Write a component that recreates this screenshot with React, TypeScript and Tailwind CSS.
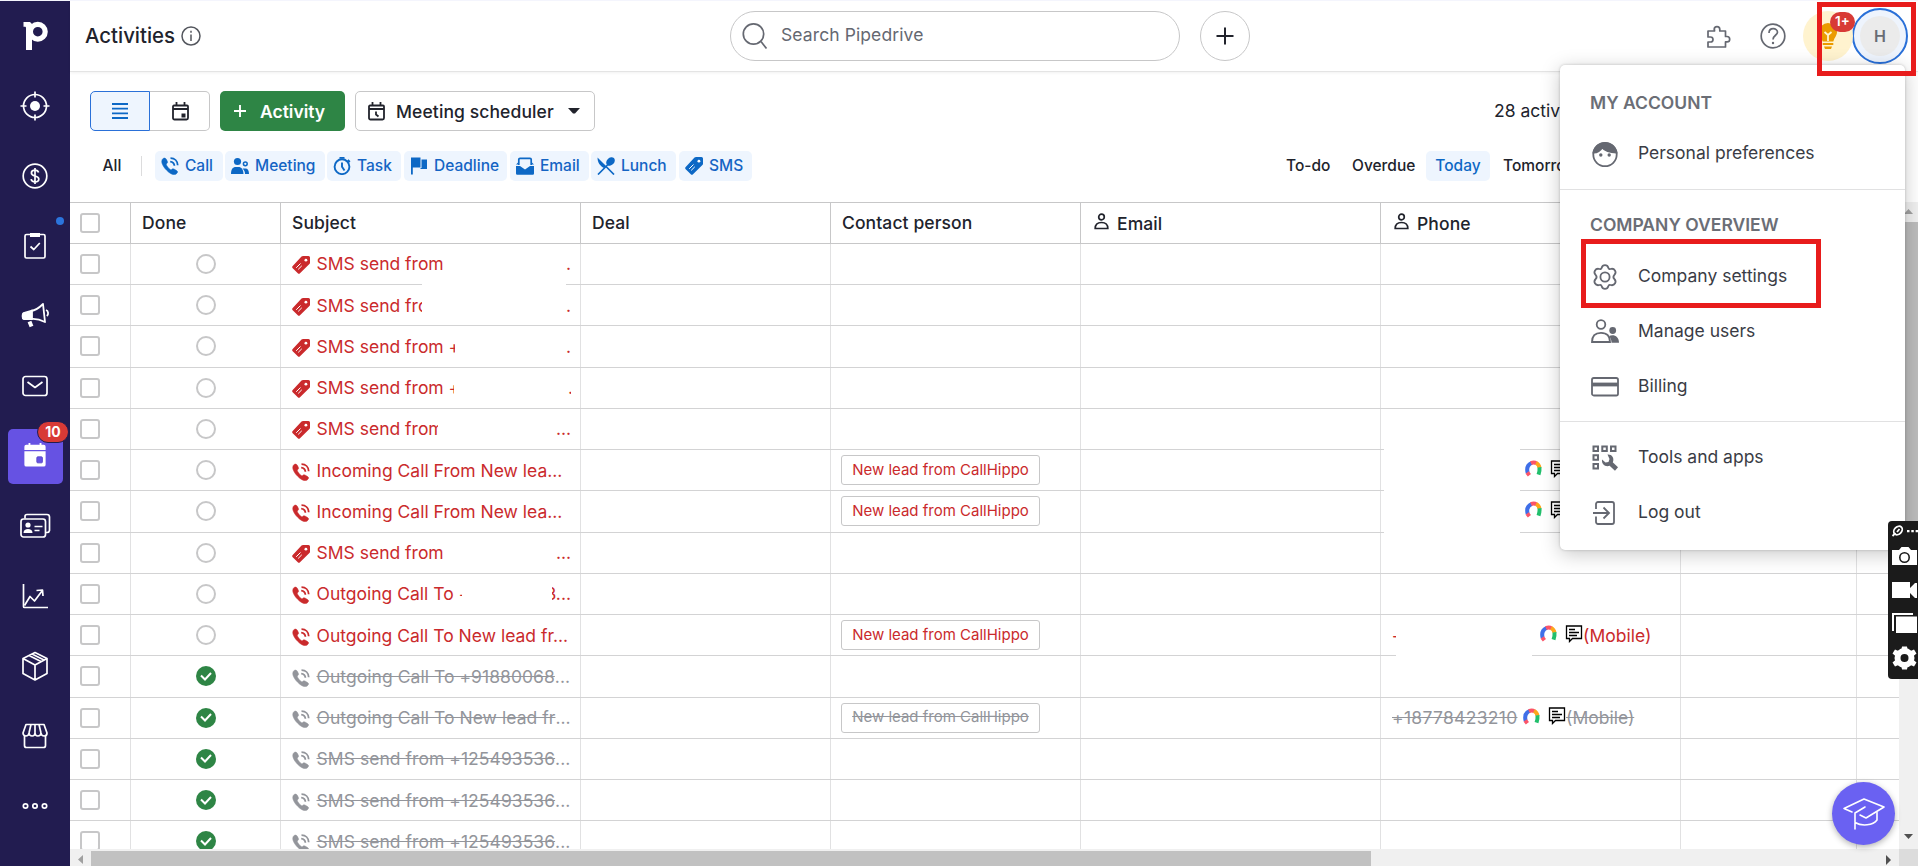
import { ReactNode } from "react";

type Kind = "sms" | "call";

type Row = {
  kind: Kind;
  text: string;
  clip?: string;
  tail?: string;
  tailClass?: string;
  done?: boolean;
  contact?: boolean;
  phone?: ReactNode;
};

const rows: Row[] = [
  { kind: "sms", text: "SMS send from", tail: "." },
  { kind: "sms", text: "SMS send fro", clip: "w-[105px]", tail: "." },
  { kind: "sms", text: "SMS send from +", clip: "w-[138px]", tail: "." },
  { kind: "sms", text: "SMS send from +", clip: "w-[137px]", tail: ".", tailClass: "w-[3px] overflow-hidden" },
  { kind: "sms", text: "SMS send from", clip: "w-[121px]", tail: "..." },
  { kind: "call", text: "Incoming Call From New lea...", contact: true, phone: <PhoneIcons className="ml-[133px]" /> },
  { kind: "call", text: "Incoming Call From New lea...", contact: true, phone: <PhoneIcons className="ml-[133px]" /> },
  { kind: "sms", text: "SMS send from", tail: "..." },
  { kind: "call", text: "Outgoing Call To +", clip: "w-[145px]", tail: "8...", tailClass: "w-[19px]" },
  {
    kind: "call",
    text: "Outgoing Call To New lead fr...",
    contact: true,
    phone: (
      <>
        <span className="w-[4px] overflow-hidden">-</span>
        <PhoneIcons className="ml-[144px]" />
        <span>(Mobile)</span>
      </>
    ),
  },
  { kind: "call", text: "Outgoing Call To +91880068", tail: "...", done: true },
  {
    kind: "call",
    text: "Outgoing Call To New lead fr",
    tail: "...",
    done: true,
    contact: true,
    phone: (
      <>
        <span className="w-[126px] tracking-[0.300px] line-through">+18778423210</span>
        <PhoneIcons className="ml-[5px]" />
        <span className="line-through">(Mobile)</span>
      </>
    ),
  },
  { kind: "call", text: "SMS send from +125493536", tail: "...", done: true },
  { kind: "call", text: "SMS send from +125493536", tail: "...", done: true },
  { kind: "call", text: "SMS send from +125493536", tail: "...", done: true },
];

export default function App() {
  return (
    <div className="relative flex h-[866px] w-[1918px] overflow-hidden border-t border-[#f4f5fd] bg-white font-[Inter,'Noto_Sans',sans-serif] text-[17.500px] text-[#21232c]">
      <Sidebar />
      <div className="flex min-w-0 flex-1 flex-col">
        <TopBar />
        <Toolbar />
        <div className="flex h-[647.5px]">
          <Table />
          <VerticalScrollbar />
        </div>
        <HorizontalScrollbar />
      </div>

      <AccountMenu />
      <div className="absolute left-[1817px] top-[1px] h-[74px] w-[99px] border-[5px] border-[#e81c1c]" />
      <div className="absolute left-[1581px] top-[238px] h-[69px] w-[240px] border-[5px] border-[#e81c1c]" />
      <RecorderWidget />
      <button className="absolute left-[1832px] top-[781px] flex size-[63px] items-center justify-center rounded-full bg-[#6a61f2] shadow-[0_2px_6px_rgba(0,0,0,0.3)]">
        <svg width="42" height="34" viewBox="0 0 42 34" fill="none" stroke="#fff" strokeWidth="1.6" strokeLinejoin="round" strokeLinecap="round">
          <path d="M9 15 1 11.5 21 2l20 8-18 11-6-3" />
          <path d="M22 10 12 16v16M34 15.500v7.500c-4 5.500-15 6.500-22 2.500" />
        </svg>
      </button>
    </div>
  );
}

/* ---------- sidebar ---------- */

function Sidebar() {
  return (
    <nav className="flex w-[70px] shrink-0 flex-col bg-[#221c50] text-white">
      <NavItem>
        <svg className="-mt-[3px]" width="30" height="32" viewBox="0 0 30 32" fill="currentColor">
          <circle cx="17.800" cy="12.700" r="7.400" fill="none" stroke="currentColor" strokeWidth="5.200" />
          <path d="M3.500 3h6.500l2 2v26H6V9c0-.7-.4-1.200-1.200-1.200H3.500z" />
        </svg>
      </NavItem>
      <NavItem>
        <Line size={30}>
          <circle cx="15" cy="15" r="11.500" />
          <circle cx="15" cy="15" r="5" fill="currentColor" stroke="none" />
          <path d="M15 .500v6M15 23.500v6M.500 15h6M23.500 15h6" />
        </Line>
      </NavItem>
      <NavItem>
        <Line size={30}>
          <circle cx="15" cy="15" r="11.800" />
          <path d="M18.600 11.500c-.5-1.600-1.900-2.300-3.600-2.300-2 0-3.600 1-3.600 2.800 0 4 7.400 2 7.400 6 0 1.900-1.700 2.900-3.800 2.900s-3.600-1-3.900-2.700M15 7v16" />
        </Line>
      </NavItem>
      <NavItem>
        <span className="absolute left-[56px] top-[6px] size-2 rounded-full bg-[#2b74dc]" />
        <Line size={30}>
          <rect x="5" y="3.500" width="20" height="23.500" rx="1.500" />
          <path d="M10 2h10v4H10z" fill="currentColor" stroke="none" />
          <path d="m10.500 15.500 3.300 3 6-6.500" />
        </Line>
      </NavItem>
      <NavItem>
        <svg width="30" height="30" viewBox="0 0 30 30" fill="none" stroke="currentColor" strokeWidth="1.800" strokeLinejoin="round">
          <path d="M11 10c4-.5 8-3 12-7l2 18c-5-2.500-9.500-3.500-14-3" />
          <path d="M12 9.500 3.500 12c-1.200.6-1.300 5.500 0 6l8.500 0z" fill="currentColor" />
          <path d="m9.500 20.500 2 5" strokeWidth="4" />
          <path d="M26 9c2.500 1 2.800 4.500.800 6" />
        </svg>
      </NavItem>
      <NavItem>
        <Line size={30}>
          <rect x="3" y="5.500" width="24" height="19" rx="2.500" />
          <path d="m7.500 11 7.500 5.500 7.500-5.500" />
        </Line>
      </NavItem>
      <NavItem>
        <span className="absolute left-[8px] top-[8px] flex size-[55px] items-center justify-center rounded-[5px] bg-[#6652e3]">
          <svg className="-ml-px -mt-[3px]" width="24" height="28" viewBox="0 0 26 28" fill="currentColor">
            <path d="M3.500 3H6V1h2v2h10V1h2v2h2.500a2 2 0 0 1 2 2v3.500h-23V5a2 2 0 0 1 2-2zM1.500 10h23v14.500a2 2 0 0 1-2 2h-19a2 2 0 0 1-2-2z" />
            <rect x="15" y="16" width="6" height="6.500" rx="1" fill="#6652e3" stroke="#5a49c8" />
          </svg>
        </span>
        <span className="absolute left-[37px] top-0 flex h-[22px] w-[32px] items-center justify-center rounded-full border border-[#221c50] bg-[#d83a36] text-[14px] font-bold leading-none">
          10
        </span>
      </NavItem>
      <NavItem>
        <Line size={32}>
          <path d="M6 8.500V6.500a2 2 0 0 1 2-2h20a2.500 2.500 0 0 1 2.500 2.500v13.500a2.500 2.500 0 0 1-2.500 2H27" />
          <rect x="2" y="9" width="24.500" height="18" rx="2.500" />
          <circle cx="9" cy="15" r="2.600" fill="currentColor" stroke="none" />
          <path d="M4.500 23c0-3 2-4 4.500-4s4.500 1 4.500 4z" fill="currentColor" stroke="none" />
          <path d="M15.500 16.500h8M15.500 20.500h5" />
        </Line>
      </NavItem>
      <NavItem>
        <Line size={30}>
          <path d="M3.500 3v22.500a1 1 0 0 0 1 1H28" />
          <path d="m4.500 24.500 5.500-9 4.500 4.500 7.500-10M16.500 9.500 22.500 9l.500 6" />
        </Line>
      </NavItem>
      <NavItem>
        <Line size={30}>
          <path d="m15 1.500 12 6v15l-12 6.500-12-6.500v-15zM3 7.500l12 6.500 12-6.500M15 14v15M9 4.500l12 6M12 3l12 6" />
        </Line>
      </NavItem>
      <NavItem>
        <Line size={30}>
          <path d="M6 3.500h18l3 8.500c0 4-5.500 4-6 0-.5 4-5.800 4-6 0-.2 4-5.500 4-6 0-.5 4-6 4-6 0zM11 3.500 9 12M15 3.500V12M19 3.500l2 8.500" />
          <path d="M4.500 15v9.500a2 2 0 0 0 2 2h17a2 2 0 0 0 2-2V15" />
        </Line>
      </NavItem>
      <NavItem>
        <Line size={30}>
          <circle cx="5.500" cy="15" r="2.200" />
          <circle cx="15" cy="15" r="2.200" />
          <circle cx="24.500" cy="15" r="2.200" />
        </Line>
      </NavItem>
    </nav>
  );
}

function NavItem({ children }: { children: ReactNode }) {
  return <div className="relative flex h-[70px] shrink-0 items-center justify-center">{children}</div>;
}

function Line({ size, children }: { size: number; children: ReactNode }) {
  return (
    <svg width={size} height={size} viewBox={`0 0 ${size} ${size}`} fill="none" stroke="currentColor" strokeWidth="1.700" strokeLinejoin="round">
      {children}
    </svg>
  );
}

/* ---------- top bar ---------- */

function TopBar() {
  return (
    <header className="flex h-[71px] shrink-0 items-center border-b border-[#e4e4e4] pl-[15px] shadow-[0_1px_3px_rgba(0,0,0,0.06)]">
      <h1 className="w-[91px] whitespace-nowrap text-[20.400px] font-medium leading-none">Activities</h1>
      <svg className="ml-[5px] shrink-0" width="20" height="20" viewBox="0 0 20 20" fill="none" stroke="#54575e" strokeWidth="1.500">
        <circle cx="10" cy="10" r="9" />
        <path d="M10 8.500v6.500M10 4.800v1.900" />
      </svg>
      <div className="ml-[529px] flex h-[50px] w-[450px] items-center rounded-full border border-[#c7c7c8] pl-[11px] text-[#656871]">
        <svg width="28" height="28" viewBox="0 0 28 28" fill="none" stroke="currentColor" strokeWidth="1.700">
          <circle cx="11.500" cy="12" r="10.200" />
          <path d="m19 19.500 5.500 7" />
        </svg>
        <span className="mb-[2px] ml-[11px] whitespace-nowrap leading-none tracking-[0.100px]">Search Pipedrive</span>
      </div>
      <button className="ml-5 flex size-[50px] items-center justify-center rounded-full border border-[#c7c7c8]">
        <svg width="18" height="18" viewBox="0 0 18 18" stroke="#21232c" strokeWidth="2">
          <path d="M9 .500v17M.500 9h17" />
        </svg>
      </button>
      <svg className="ml-[456px]" width="26" height="26" viewBox="0 0 26 26" fill="none" stroke="#656871" strokeWidth="1.700" strokeLinejoin="round">
        <path d="M2 8h6.500V6.500h-.3a2.700 2.700 0 1 1 5.600 0V8H19.500v5.500H21a2.700 2.700 0 0 1 0 5.400h-1.500V24H2v-5h2.500a2.200 2.200 0 0 0 0-5H2z" />
      </svg>
      <svg className="ml-[28px]" width="26" height="26" viewBox="0 0 26 26" fill="none" stroke="#656871" strokeWidth="1.700">
        <circle cx="13" cy="13" r="11.800" />
        <path d="M9 10c0-6 8.500-5.300 8.500-.8 0 3-4.500 3.300-4.500 7.300" />
        <circle cx="13" cy="20" r="1.200" fill="#656871" stroke="none" />
      </svg>
      <div className="relative ml-[17px] flex size-[50px] shrink-0 items-center justify-center rounded-full bg-[#fff3cf]">
        <svg width="18" height="26" viewBox="0 0 18 26" fill="#eb9b00">
          <path d="M9 0a9 9 0 0 1 9 9c0 3.500-2.300 5-3.700 9.500H3.700C2.300 14 0 12.500 0 9a9 9 0 0 1 9-9zM3.700 20h10.600v2H3.700zM5 23.500h8L12 26H6z" />
          <path d="M5.500 9 9 12l3.500-3M9 12v6" fill="none" stroke="#fff3cf" strokeWidth="1.800" />
        </svg>
        <span className="absolute left-[27px] top-[1px] flex h-[20px] w-[25px] items-center justify-center rounded-full bg-[#d83a36] text-[13.500px] font-semibold leading-none text-white">
          1+
        </span>
      </div>
      <div className="ml-[-1px] flex size-[56px] shrink-0 items-center justify-center rounded-full border-2 border-[#2a70d8] bg-[#eef4fd]">
        <span className="flex size-[40px] items-center justify-center rounded-full bg-[#ebebeb] text-[16px] font-semibold text-[#696c74]">H</span>
      </div>
    </header>
  );
}

/* ---------- toolbar ---------- */

function CalendarBase() {
  return <path d="M2 3.500h13a1 1 0 0 1 1 1V16a1.500 1.500 0 0 1-1.500 1.500h-12A1.500 1.500 0 0 1 1 16V4.500a1 1 0 0 1 1-1zM1 7h15M4.500 0v3M12.500 0v3" />;
}

function Toolbar() {
  return (
    <div className="h-[129.500px] shrink-0 pl-[20px] pt-[19px]">
      <div className="flex h-[40px] items-center">
        <div className="flex h-full w-[60px] items-center justify-center rounded-l-[5px] border border-[#2a70d8] bg-[#eef5fe]">
          <svg width="16" height="16" viewBox="0 0 16 16" stroke="#0d68c5" strokeWidth="1.800">
            <path d="M0 1h16M0 5.700h16M0 10.300h16M0 15h16" />
          </svg>
        </div>
        <div className="flex h-full w-[60px] items-center justify-center rounded-r-[5px] border border-l-0 border-[#c7c7c8]">
          <svg className="ml-px" width="17" height="19" viewBox="0 0 17 19" fill="none" stroke="#21232c" strokeWidth="1.800">
            <CalendarBase />
            <path d="M9.500 11.500h4v4h-4z" fill="#21232c" stroke="none" />
          </svg>
        </div>
        <button className="ml-[10px] flex h-full w-[125px] items-center rounded-[5px] bg-[#2e8545] pl-[14px] font-semibold text-white">
          <svg width="12" height="12" viewBox="0 0 12 12" stroke="currentColor" strokeWidth="1.900">
            <path d="M6 0v12M0 6h12" />
          </svg>
          <span className="ml-[14px] mt-[2px]">Activity</span>
        </button>
        <button className="ml-[10px] flex h-full w-[240px] items-center rounded-[5px] border border-[#c7c7c8] pl-[12px] font-medium">
          <svg width="17" height="19" viewBox="0 0 17 19" fill="none" stroke="#21232c" strokeWidth="1.800">
            <CalendarBase />
            <path d="M8 9.500v3l2.500 2" />
          </svg>
          <span className="ml-[11px] mt-[2px] w-[162px] whitespace-nowrap text-left tracking-[0.100px]">Meeting scheduler</span>
          <svg className="ml-[10px]" width="12" height="6" viewBox="0 0 12 6" fill="#21232c">
            <path d="M0 0h12L7 5.500H5z" />
          </svg>
        </button>
        <span className="ml-[899px] whitespace-nowrap">28 activities</span>
      </div>

      <div className="mt-5 flex h-[30px] items-center text-[15.500px] font-medium">
        <span className="ml-[12.500px] w-[38.500px]">All</span>
        <span className="h-5 w-px bg-[#dcdcdd]" />
        <Chip className="ml-[13px] w-[68px]" label="Call" icon={<CallIcon />} />
        <Chip className="ml-[2px] w-[100px]" label="Meeting" icon={<MeetingIcon />} />
        <Chip className="ml-[2px] w-[74px]" label="Task" icon={<TaskIcon />} />
        <Chip className="ml-[3px] w-[103px]" label="Deadline" icon={<DeadlineIcon />} />
        <Chip className="ml-[3px] w-[79px]" label="Email" icon={<EmailIcon />} />
        <Chip className="ml-[2px] w-[85px]" label="Lunch" icon={<LunchIcon />} />
        <Chip className="ml-[3px] w-[73px]" label="SMS" icon={<TagIcon />} />
        <span className="ml-[534px] w-[66px]">To-do</span>
        <span className="w-[74px]">Overdue</span>
        <span className="flex h-full w-[64px] items-center justify-center rounded-[5px] bg-[#eef5fe] text-[#0d68c5]">Today</span>
        <span className="ml-[13px]">Tomorrow</span>
      </div>
    </div>
  );
}

function Chip({ className, label, icon }: { className: string; label: string; icon: ReactNode }) {
  return (
    <span className={`flex h-full shrink-0 items-center whitespace-nowrap rounded-[5px] bg-[#eef5fe] pl-[6px] text-[#1464c4] ${className}`}>
      <span className="mr-[6px] flex text-[#0d68c5]">{icon}</span>
      {label}
    </span>
  );
}

function CallIcon() {
  return (
    <svg className="shrink-0" width="18" height="18" viewBox="0 0 18 18" fill="currentColor">
      <path d="M1.800 1.800c1.500-1.300 2.800-.8 3.700.8l.9 1.900c.5 1-.2 1.700-1 2.400-.3.500 0 1.200 1 2.600 1.300 1.700 2.400 2.900 3.300 3.300.7.300 1.300-.8 2-1 .5-.2 1 0 1.800.5l2.400 1.500c1.200.9.600 2-.7 3.100-1.600 1.300-4.500.8-7.500-1.700C4.500 12.500 2 9.500 1 6.300.5 4.400.8 2.700 1.800 1.800z" stroke="currentColor" strokeWidth="0.500" />
      <path d="M9.500 1.200c4.200 0 7 2.800 7.200 7M9.200 4.600c2.500.2 4 1.700 4.200 4.200" fill="none" stroke="currentColor" strokeWidth="1.800" />
    </svg>
  );
}

function MeetingIcon() {
  return (
    <svg width="18" height="18" viewBox="0 0 18 18" fill="currentColor">
      <circle cx="6.500" cy="4.500" r="3.600" />
      <path d="M0 17c0-4.500 1.500-7 5-7h2.500c3 0 4.800 2.500 5 7z" />
      <circle cx="14.300" cy="6.800" r="1.900" fill="none" stroke="currentColor" strokeWidth="1.500" />
      <path d="M11.500 11.500h3c2.300 0 3.500 2 3.500 5.500h-4c0-2.500-.8-4-2.500-5.500z" />
    </svg>
  );
}

function TaskIcon() {
  return (
    <svg width="18" height="18" viewBox="0 0 18 18" fill="none" stroke="currentColor" strokeWidth="1.900">
      <circle cx="9" cy="9.700" r="7.400" />
      <path d="M9 5.500v4.200l2.500 3.800M6.500.9h5M14.800 3l2 2" />
    </svg>
  );
}

function DeadlineIcon() {
  return (
    <svg width="18" height="18" viewBox="0 0 18 18" fill="currentColor">
      <path d="M1 .500h9.500v10H2.800v7H1zM11.500 2.500H17V12h-6.500v-1h1z" />
    </svg>
  );
}

function EmailIcon() {
  return (
    <svg width="18" height="18" viewBox="0 0 18 18" fill="currentColor">
      <path d="M2.800 8V2.500A1.200 1.200 0 0 1 4 1.300h10a1.200 1.200 0 0 1 1.200 1.200V8" fill="none" stroke="currentColor" strokeWidth="1.700" />
      <path d="M0 9h4l5 3.500L14 9h4v7.500a1.200 1.200 0 0 1-1.200 1.200H1.200A1.200 1.200 0 0 1 0 16.500z" />
      <path d="M0 7.500l3-3v3zM18 7.500l-3-3v3z" />
    </svg>
  );
}

function LunchIcon() {
  return (
    <svg width="18" height="18" viewBox="0 0 18 18" fill="currentColor">
      <path d="M.500.500 9.300 9.300 7 11C3 9 .500 5.500.500.500z" />
      <path d="m9 9.500 8 8M1 17.500l9.500-9.500" stroke="currentColor" strokeWidth="1.700" />
      <ellipse cx="13.500" cy="4.500" rx="3.700" ry="4.800" transform="rotate(45 13.500 4.500)" />
    </svg>
  );
}

function TagIcon() {
  return (
    <svg className="shrink-0" width="18" height="18" viewBox="0 0 18 18" fill="currentColor">
      <path d="M11 0h5.500A1.500 1.500 0 0 1 18 1.500v5.200c0 .500-.2 1-.6 1.400L8 17.300c-.7.700-1.500.7-2.200 0L.7 12.300c-.7-.7-.7-1.500 0-2.200L9.500.6c.5-.4 1-.6 1.500-.6z" />
      <circle cx="13.900" cy="4.200" r="1.400" fill="#fff" />
      <path d="m4.200 11.800 4.300-4.300M6.200 13.400l3.600-3.600" stroke="#fff" strokeWidth="1" />
    </svg>
  );
}

/* ---------- table ---------- */

const widths = ["w-[60px]", "w-[150px]", "w-[300px]", "w-[250px]", "w-[250px]", "w-[300px]", "w-[300px]", "w-[176px]", "w-[43px]"];

function Table() {
  const headers: ReactNode[] = [
    <CheckBox key="check" />,
    "Done",
    "Subject",
    "Deal",
    "Contact person",
    <PersonLabel key="email" label="Email" />,
    <PersonLabel key="phone" label="Phone" />,
    "",
    "",
  ];
  return (
    <div className="relative w-[1829px] overflow-hidden">
      <div className="flex h-[41.250px] border-t border-[#c7c7c8] font-medium">
        {headers.map((h, i) => (
          <div key={i} className={`flex shrink-0 items-center whitespace-nowrap tracking-[0.100px] ${widths[i]} ${i ? "border-l border-[#c7c7c8] pl-[11px]" : "pl-[10px]"}`}>
            {h}
          </div>
        ))}
      </div>
      {rows.map((row, i) => (
        <TableRow key={i} row={row} first={i === 0} />
      ))}
      {/* blanked out personal data */}
      <div className="absolute left-[352px] top-[72px] h-[16px] w-[144px] bg-white" />
      <div className="absolute left-[1314px] top-[242px] h-[94px] w-[136px] bg-white" />
      <div className="absolute left-[1326px] top-[440px] h-[20px] w-[136px] bg-white" />
    </div>
  );
}

function TableRow({ row, first }: { row: Row; first: boolean }) {
  const color = row.done ? "text-[#93959b]" : "text-[#ca2a2c]";
  const cell = "flex shrink-0 items-center whitespace-nowrap border-l border-[#e1e1e2] pl-[11px]";
  return (
    <div className={`flex h-[41.250px] border-t ${first ? "border-[#c7c7c8]" : "border-[#d3d3d4]"} ${color}`}>
      <div className="flex w-[60px] shrink-0 items-center pl-[10px]">
        <CheckBox />
      </div>
      <div className={`${cell} w-[150px]`}>
        {row.done ? (
          <span className="ml-[54px] flex size-5 items-center justify-center rounded-full bg-[#2e8545]">
            <svg width="12" height="9" viewBox="0 0 12 9" fill="none" stroke="#fff" strokeWidth="2">
              <path d="m1 3.500 4 4L11 1" />
            </svg>
          </span>
        ) : (
          <span className="ml-[54px] size-5 rounded-full border-2 border-[#c7c7c8]" />
        )}
      </div>
      <div className={`${cell} w-[300px] pr-[9px] pt-px`}>
        <span className="mt-[2px] flex shrink-0">{row.kind === "sms" ? <TagIcon /> : <CallIcon />}</span>
        <span className={`ml-[6.500px] ${row.clip ? `shrink-0 overflow-hidden ${row.clip}` : ""} ${row.done ? "tracking-[0.050px] line-through" : ""}`}>{row.text}</span>
        {row.tail && (
          <span className={`${row.done ? "" : "ml-auto"} ${row.tail === "8..." ? "flex justify-end overflow-hidden" : ""} ${row.tailClass ?? ""}`}>{row.tail}</span>
        )}
      </div>
      <div className={`${cell} w-[250px]`} />
      <div className={`${cell} w-[250px]`}>
        {row.contact && (
          <span className={`-ml-px flex h-[30px] w-[199px] items-center justify-center rounded-[3px] border border-[#c7c7c8] text-[15px] ${row.done ? "line-through" : ""}`}>
            New lead from CallHippo
          </span>
        )}
      </div>
      <div className={`${cell} w-[300px]`} />
      <div className={`${cell} w-[300px] pt-px`}>{row.phone}</div>
      <div className={`${cell} w-[176px]`} />
      <div className={`${cell} w-[43px]`} />
    </div>
  );
}

function CheckBox() {
  return <span className="size-5 rounded-[3px] border-2 border-[#c7c7c8] bg-white" />;
}

function PersonLabel({ label }: { label: string }) {
  return (
    <>
      <svg className="mb-[2px] ml-[2px] mr-[8px]" width="15" height="17" viewBox="0 0 15 17" fill="none" stroke="#21232c" strokeWidth="1.700">
        <circle cx="7.500" cy="4" r="2.800" />
        <path d="M1.200 15.500c0-4 2-6 6.300-6s6.300 2 6.300 6z" />
      </svg>
      <span className="mt-[2px]">{label}</span>
    </>
  );
}

function PhoneIcons({ className }: { className: string }) {
  return (
    <span className={`mb-[4px] flex shrink-0 items-center ${className}`}>
      <svg width="17" height="17" viewBox="0 0 17 17" fill="none" strokeWidth="4">
        <path d="M2.700 13C1.500 8.500 2.700 4.700 6.500 3" stroke="#3f6fe8" />
        <path d="M6 3.100c2-1 4-.8 5.500.2" stroke="#fb5468" />
        <path d="M11 3c2 .9 3.200 2.800 3.500 4.800" stroke="#fda61c" />
        <path d="M14.500 7.200c.3 2.500 0 4.500-1 7.500" stroke="#22bf6c" />
        <path d="m2.200 12.500 2.200 2.800" stroke="#fb5468" />
      </svg>
      <svg className="ml-[8px]" width="18" height="18" viewBox="0 0 18 18" fill="none" stroke="#000" strokeWidth="1.300">
        <path d="M1.500 1h15v12.500H7.500L4.500 16.500V13.500h-3z" />
        <path d="M4 4.500h6M4 7.500h10M4 10.500h8" />
      </svg>
    </span>
  );
}

function VerticalScrollbar() {
  return (
    <div className="flex w-[19px] shrink-0 flex-col bg-[#f0f0f0]">
      <div className="flex h-[20px] items-center justify-center">
        <svg width="9" height="5" viewBox="0 0 9 5" fill="#a0a0a0">
          <path d="M0 5 4.500 0 9 5z" />
        </svg>
      </div>
      <div className="ml-px h-[420px] bg-[#bcbcbc]" />
      <div className="mb-[10px] mt-auto flex justify-center">
        <svg width="9" height="5" viewBox="0 0 9 5" fill="#505050">
          <path d="M0 0h9L4.500 5z" />
        </svg>
      </div>
    </div>
  );
}

function HorizontalScrollbar() {
  return (
    <div className="flex h-[17px] items-center bg-[#f0f0f0]">
      <svg className="ml-[8px] mt-1" width="5" height="9" viewBox="0 0 5 9" fill="#a0a0a0">
        <path d="M5 0v9L0 4.500z" />
      </svg>
      <div className="ml-[8px] mt-[2px] h-[15px] w-[1280px] bg-[#c1c1c1]" />
      <svg className="ml-auto mr-[8px] mt-1" width="5" height="10" viewBox="0 0 5 10" fill="#505050">
        <path d="M0 0v10l5-5z" />
      </svg>
      <div className="h-full w-[19px] bg-[#dcdcdc]" />
    </div>
  );
}

/* ---------- account menu ---------- */

function AccountMenu() {
  return (
    <div className="absolute left-[1560px] top-[64px] h-[485px] w-[345px] rounded-[5px] bg-white text-[#3a3c45] shadow-[0_4px_20px_rgba(0,0,0,0.22),0_0_3px_rgba(0,0,0,0.2)]">
      <MenuTitle className="pb-[5px] pt-[20px]">MY ACCOUNT</MenuTitle>
      <MenuItem
        label="Personal preferences"
        icon={
          <>
            <circle cx="15" cy="15.500" r="11.700" />
            <path d="M3.500 13.500c4 0 7-2 8.500-5 2.500 3 7.500 5 14.500 5A11.700 11.700 0 0 0 3.500 13.500z" fill="currentColor" />
            <circle cx="10.800" cy="16" r="1.700" fill="currentColor" stroke="none" />
            <circle cx="19.200" cy="16" r="1.700" fill="currentColor" stroke="none" />
          </>
        }
      />
      <div className="mt-[8px] border-t border-[#e1e1e2]" />
      <MenuTitle className="pb-[6px] pt-[17px]">COMPANY OVERVIEW</MenuTitle>
      <MenuItem
        label="Company settings"
        icon={
          <>
            <circle cx="15" cy="15" r="4.600" />
            <path d="M15 3.200c2 0 2.800.8 3.300 2.600.3 1 1.200 1.500 2.200 1.200 2-.6 3.400-.3 4.600 1.700 1 1.700.6 2.900-.8 4.300-1 1.100-1 2.900 0 4 1.400 1.400 1.800 2.600.8 4.300-1.200 2-2.600 2.300-4.600 1.700-1-.3-1.900.2-2.200 1.200-.5 1.800-1.300 2.600-3.300 2.600s-2.800-.8-3.300-2.600c-.3-1-1.200-1.500-2.200-1.200-2 .6-3.400.3-4.600-1.700-1-1.700-.6-2.900.8-4.300 1-1.100 1-2.900 0-4-1.400-1.400-1.800-2.600-.8-4.300C6.100 6.700 7.500 6.400 9.500 7c1 .3 1.900-.2 2.200-1.200.5-1.800 1.300-2.600 3.300-2.600z" />
          </>
        }
      />
      <MenuItem
        label="Manage users"
        icon={
          <>
            <circle cx="11" cy="7.500" r="4.300" />
            <path d="M2 25c0-6 3-9.200 9-9.200S20 19 20 25z" />
            <circle cx="22.700" cy="13.500" r="3.400" fill="currentColor" stroke="none" />
            <path d="M19 19c5-2 10 .5 10 6.800h-7.500c0-3-.8-5-2.500-6.800z" fill="currentColor" stroke="none" />
          </>
        }
      />
      <MenuItem
        label="Billing"
        icon={
          <>
            <rect x="2" y="6" width="26" height="17.500" rx="1.800" />
            <path d="M2 12.500h26" strokeWidth="3.800" />
          </>
        }
      />
      <div className="mt-[7px] border-t border-[#e1e1e2]" />
      <div className="h-[8px]" />
      <MenuItem
        label="Tools and apps"
        icon={
          <>
            <path d="M3.500 3.500H8V8H3.500zM12.300 3.500h4.500V8h-4.500zM21 3.500h4.500V8H21zM3.500 12.300H8v4.500H3.500zM3.500 21H8v4.500H3.500z" strokeWidth="2" />
            <path d="m19 19 7.500 7" strokeWidth="4.500" />
            <path d="M17.500 11.500c4-.5 7 3 5.500 7.500l-4 4c-4.500.8-7.500-2-7-6.500l3.500 3 3-.5 1-3z" fill="currentColor" stroke="none" />
          </>
        }
      />
      <MenuItem
        label="Log out"
        icon={
          <>
            <path d="M6 11V6a2 2 0 0 1 2-2h14a2 2 0 0 1 2 2v18a2 2 0 0 1-2 2H8a2 2 0 0 1-2-2v-5.500M3 15h16M13.500 9.500 19 15l-5.500 5.500" />
          </>
        }
      />
    </div>
  );
}

function MenuTitle({ className, children }: { className: string; children: ReactNode }) {
  return <div className={`pl-[30px] font-semibold leading-[36px] text-[#6b6e76] ${className}`}>{children}</div>;
}

function MenuItem({ label, icon }: { label: string; icon: ReactNode }) {
  return (
    <div className="flex h-[55px] items-center pl-[30px]">
      <svg width="30" height="30" viewBox="0 0 30 30" fill="none" stroke="currentColor" strokeWidth="1.800" className="shrink-0 text-[#656871]">
        {icon}
      </svg>
      <span className="ml-[18px] whitespace-nowrap">{label}</span>
    </div>
  );
}

/* ---------- floating recorder ---------- */

function RecorderWidget() {
  return (
    <div className="absolute left-[1888px] top-[520px] h-[158px] w-[30px] overflow-hidden rounded-l-[4px] bg-[#1b1b1b]">
      <svg width="30" height="158" viewBox="0 0 30 158" fill="#fff">
        <ellipse cx="10" cy="9.500" rx="4.800" ry="3.600" transform="rotate(-45 10 9.500)" fill="none" stroke="#fff" strokeWidth="1.800" />
        <path d="m4.500 15 3-3M9 11l2.500-3" stroke="#fff" strokeWidth="1.800" />
        <path d="M19 9h2.500v2.200H19zM23.300 9h2.500v2.200h-2.500zM27.600 9H30v2.200h-2.400z" />
        <path d="M4 29h7l2.500-3h7l2.500 3h6v15H4z" />
        <circle cx="16.500" cy="36.500" r="4.700" fill="none" stroke="#1b1b1b" strokeWidth="1.600" />
        <path d="M4 61h18v6l5-5h2v15h-2l-5-5v5H4z" />
        <path d="M4 92h21v2H6v16H4z" />
        <path d="M8 95.500h21V112H8z" />
        <circle cx="16.500" cy="137" r="7" fill="none" stroke="#fff" strokeWidth="6" />
        <path d="m14 125.500h5l1 5h-7zM14 148.500h5l1-5h-7zM4.500 132.500l2.500-4 4.500 2-3.500 5zM28.500 132.500l-2.500-4-4.500 2 3.500 5zM4.500 141.500l2.500 4 4.500-2-3.500-5zM28.500 141.500l-2.500 4-4.500-2 3.500-5z" />
      </svg>
    </div>
  );
}
